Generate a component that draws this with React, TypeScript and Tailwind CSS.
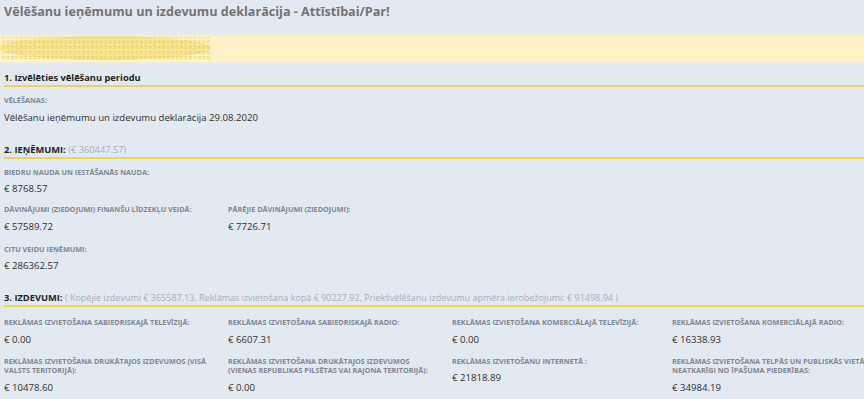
import React from "react";

const font = { fontFamily: '"Open Sans", "Noto Sans", sans-serif' };

function Field({ label, value, pb = "pb-[7px]" }: { label: React.ReactNode; value: string; pb?: string }) {
  return (
    <div className={`pr-[12px] ${pb}`}>
      <div className="text-[7.25px] leading-[9.5px] font-bold uppercase text-[#7f8690] whitespace-nowrap">{label}</div>
      <div className="mt-[4px] text-[9.6px] leading-[16px] text-[#2e2e2e]">{value}</div>
    </div>
  );
}

function Heading({ children }: { children: React.ReactNode }) {
  return (
    <div className="ml-[4px] border-b-2 border-[#f0d545] text-[9.3px] leading-[14px] text-[#1f1f1f] whitespace-nowrap">
      {children}
    </div>
  );
}

function Scribble() {
  const lines = [];
  for (let i = 0; i < 9; i++) {
    const y = 3 + i * 2.6;
    let d = `M2 ${y}`;
    for (let x = 2; x < 205; x += 8) {
      d += ` q4 ${i % 2 ? 1.2 : -1.2} 8 0`;
    }
    lines.push(<path key={i} d={d} stroke="#dcbd3c" strokeWidth="0.8" fill="none" strokeDasharray="3 1.5" opacity="0.75" />);
  }
  return (
    <svg width="214" height="28" viewBox="0 0 214 28" className="absolute left-0 top-[-1px]">
      <ellipse cx="105" cy="13" rx="106" ry="12" fill="#f6e28c" opacity="0.8" />
      {lines}
    </svg>
  );
}

export default function App() {
  return (
    <div className="w-[864px] h-[399px] overflow-hidden bg-[#e3e9f0]" style={font}>
      <div className="w-[900px]">
        <div className="pl-[4px] pt-[2px] text-[12.6px] leading-[20px] font-bold text-[#737373] whitespace-nowrap">
          Vēlēšanu ieņēmumu un izdevumu deklarācija - Attīstībai/Par!
        </div>
        <div className="relative mt-[14px] h-[26px] bg-[#fdf2c7] shadow-[0_0_2px_1px_#f6efcf]">
          <Scribble />
        </div>

        <div className="mt-[9px]">
          <Heading><span className="font-bold">1. Izvēlēties vēlēšanu periodu</span></Heading>
        </div>
        <div className="pl-[4px] mt-[9px]">
          <Field label="Vēlēšanas:" value="Vēlēšanu ieņēmumu un izdevumu deklarācija 29.08.2020" />
        </div>

        <div className="mt-[10px]">
          <Heading>
            <span className="font-bold">2. IEŅĒMUMI:</span>{" "}
            <span className="text-[#a6aeb9]">(€ 360447.57)</span>
          </Heading>
        </div>
        <div className="pl-[4px] mt-[9px] grid grid-cols-[224px_224px_220px_224px]">
          <div className="col-span-4 pb-[1px]">
            <Field label="Biedru nauda un iestāšanās nauda:" value="€ 8768.57" />
          </div>
          <div className="pb-[3px]">
            <Field label="Dāvinājumi (ziedojumi) finanšu līdzekļu veidā:" value="€ 57589.72" />
          </div>
          <div className="col-span-3">
            <Field label="Pārējie dāvinājumi (ziedojumi):" value="€ 7726.71" />
          </div>
          <div className="col-span-4">
            <Field label="Citu veidu ieņēmumi:" value="€ 286362.57" />
          </div>
        </div>

        <div className="mt-[10px]">
          <Heading>
            <span className="font-bold">3. IZDEVUMI:</span>{" "}
            <span className="text-[9px] text-[#a6aeb9]">
              ( Kopējie izdevumi € 365587.13, Reklāmas izvietošana kopā € 90227.92, Priekšvēlēšanu izdevumu apmēra ierobežojumi: € 91498.94 )
            </span>
          </Heading>
        </div>
        <div className="pl-[4px] mt-[11px] grid grid-cols-[224px_224px_220px_224px]">
          <Field pb="pb-[9px]" label="Reklāmas izvietošana sabiedriskajā televīzijā:" value="€ 0.00" />
          <Field pb="pb-[9px]" label="Reklāmas izvietošana sabiedriskajā radio:" value="€ 6607.31" />
          <Field pb="pb-[9px]" label="Reklāmas izvietošana komerciālajā televīzijā:" value="€ 0.00" />
          <Field pb="pb-[9px]" label="Reklāmas izvietošana komerciālajā radio:" value="€ 16338.93" />
          <Field
            label={<>Reklāmas izvietošana drukātajos izdevumos (visā<br />valsts teritorijā):</>}
            value="€ 10478.60"
          />
          <Field
            label={<>Reklāmas izvietošana drukātajos izdevumos<br />(vienas republikas pilsētas vai rajona teritorijā):</>}
            value="€ 0.00"
          />
          <Field label="Reklāmas izvietošanu internetā :" value="€ 21818.89" />
          <Field
            label={<>Reklāmas izvietošana telpās un publiskās vietās,<br />neatkarīgi no īpašuma piederības:</>}
            value="€ 34984.19"
          />
        </div>
      </div>
    </div>
  );
}
